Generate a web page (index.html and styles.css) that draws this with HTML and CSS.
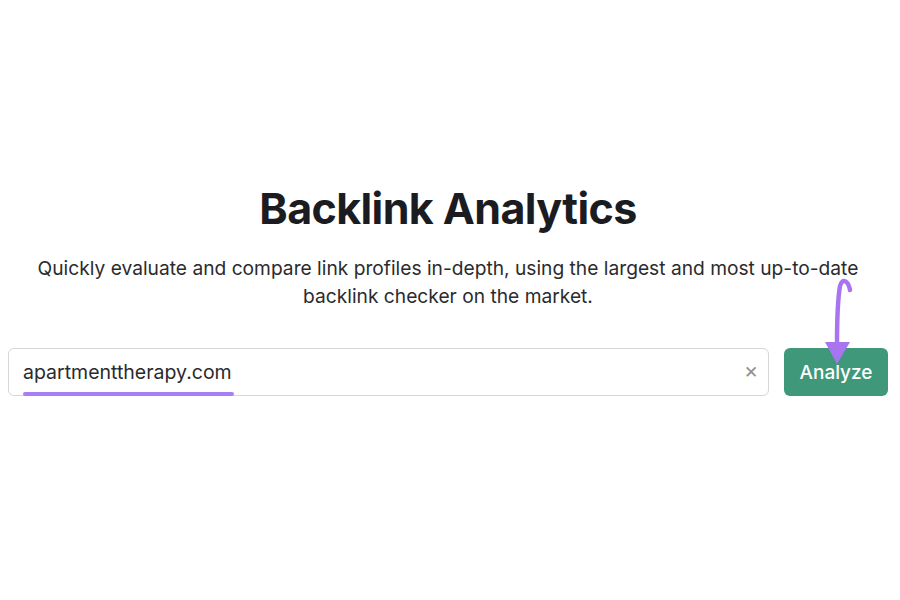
FILE: index.html
```html
<!DOCTYPE html>
<html lang="en">
<head>
  <meta charset="UTF-8">
  <meta name="viewport" content="width=device-width, initial-scale=1.0">
  <title>Backlink Analytics</title>
  <link rel="stylesheet" href="styles.css">
</head>
<body>
  <div class="container">
    <h1 class="heading">Backlink Analytics</h1>
    <p class="lead">Quickly evaluate and compare link profiles in-depth, using the largest and most up-to-date backlink checker on the market.</p>
    <div class="search">
      <div class="field">
        <span class="value">apartmenttherapy.com</span>
        <span class="clear">&#x2715;</span>
      </div>
      <div class="action">
        <button class="analyze">Analyze</button>
        <svg class="arrow" width="50" height="96" viewBox="0 0 50 96">
          <path d="M38 18 C36 8 30 6 28 14 C26 26 25 44 25 72" fill="none" stroke="#a874f0" stroke-width="4.5" stroke-linecap="round"/>
          <polygon points="13,70 38,70 25,92" fill="#a874f0"/>
        </svg>
      </div>
    </div>
  </div>
</body>
</html>
```

FILE: styles.css
```css
body {
  margin: 0;
  background-color: #ffffff;
  font-family: Inter, "Noto Sans", sans-serif;
}
.container {
  display: flex;
  flex-direction: column;
  align-items: center;
  padding: 180px 12px 0 8px;
}
.heading {
  margin: 0;
  font-size: 43px;
  font-weight: 700;
  color: #1b1c22;
  letter-spacing: -0.6px;
  line-height: 56px;
}
.lead {
  margin: 18px 0 0 0;
  width: 860px;
  text-align: center;
  font-size: 19.2px;
  line-height: 28px;
  color: #2b2b2e;
}
.search {
  display: flex;
  align-self: stretch;
  gap: 15px;
  margin-top: 38px;
}
.field {
  flex: 1;
  display: flex;
  align-items: center;
  justify-content: space-between;
  height: 46px;
  border: 1px solid #d6d6db;
  border-radius: 6px;
  padding: 0 10px 0 14px;
}
.value {
  position: relative;
  font-size: 19.5px;
  color: #2a2a2e;
}
.value::after {
  content: "";
  position: absolute;
  left: 0;
  right: -2px;
  bottom: -12px;
  height: 4px;
  border-radius: 2px;
  background-color: #a97ef2;
}
.clear {
  font-size: 17px;
  color: #8e8e94;
}
.action {
  position: relative;
}
.analyze {
  height: 48px;
  width: 104px;
  border: none;
  border-radius: 6px;
  background-color: #40987a;
  color: #ffffff;
  font-family: Inter, "Noto Sans", sans-serif;
  font-size: 19px;
  font-weight: 500;
}
.arrow {
  position: absolute;
  left: 28px;
  top: -76px;
}
```
